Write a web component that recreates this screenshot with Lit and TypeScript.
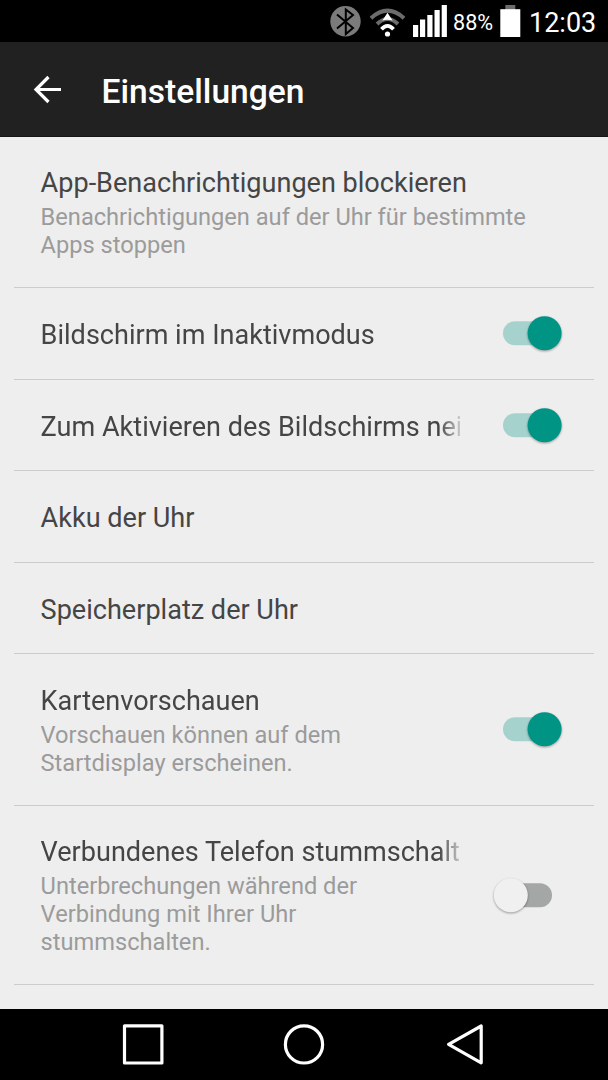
import { LitElement, html, css, svg, nothing } from "lit";
import { customElement, property } from "lit/decorators.js";
import { classMap } from "lit/directives/class-map.js";

@customElement("toggle-switch")
class ToggleSwitch extends LitElement {
  @property({ type: Boolean }) on = false;

  static styles = css`
    :host { display: block; width: 78px; height: 44px; flex: none; }
    svg { display: block; }
    .thumb { filter: drop-shadow(0 1.5px 1.2px rgba(0, 0, 0, 0.36)); }
  `;

  render() {
    return html`<svg width="78" height="44" viewBox="0 0 78 44">
      <rect x="13" y="10.2" width="49" height="24" rx="12" fill=${this.on ? "#a6d2cd" : "#a5a7a6"} />
      <circle class="thumb" cx=${this.on ? 54.6 : 20.8} cy="22.2" r="17" fill=${this.on ? "#009485" : "#f0f0f0"} />
    </svg>`;
  }
}

@customElement("settings-row")
class SettingsRow extends LitElement {
  @property() label = "";
  @property() summary = "";
  @property() toggle: "" | "on" | "off" = "";

  static styles = css`
    :host { display: flex; align-items: center; box-sizing: border-box; margin: 0 14px; padding-left: 26.6px; border-bottom: 1px solid #cccccc; }
    .text { width: 500px; padding-bottom: 1px; }
    .text.narrow { width: 419px; overflow: hidden; padding-bottom: 0; }
    .text.single { padding: 3.6px 0 0; }
    .label { font-size: 27.07px; line-height: 38px; color: #454545; white-space: nowrap; }
    .narrow .label { -webkit-mask-image: linear-gradient(to right, #000 398px, transparent 425px); mask-image: linear-gradient(to right, #000 398px, transparent 425px); overflow: hidden; }
    .summary { font-size: 23.64px; line-height: 28px; color: #9b9b9b; margin-top: 1px; white-space: pre-line; }
    toggle-switch { margin-left: 30.4px; }
  `;

  render() {
    return html`
      <div class=${classMap({ text: true, narrow: this.toggle !== "", single: !this.summary })}>
        <div class="label">${this.label}</div>
        ${this.summary ? html`<div class="summary">${this.summary}</div>` : nothing}
      </div>
      ${this.toggle ? html`<toggle-switch ?on=${this.toggle === "on"}></toggle-switch>` : nothing}
    `;
  }
}

const items: { label: string; summary?: string; toggle?: string; height: number }[] = [
  { label: "App-Benachrichtigungen blockieren", summary: "Benachrichtigungen auf der Uhr für bestimmte\nApps stoppen", height: 151 },
  { label: "Bildschirm im Inaktivmodus", toggle: "on", height: 91.5 },
  { label: "Zum Aktivieren des Bildschirms neigen", toggle: "on", height: 91.5 },
  { label: "Akku der Uhr", height: 91.5 },
  { label: "Speicherplatz der Uhr", height: 91.5 },
  { label: "Kartenvorschauen", summary: "Vorschauen können auf dem\nStartdisplay erscheinen.", toggle: "on", height: 151.5 },
  { label: "Verbundenes Telefon stummschalten", summary: "Unterbrechungen während der\nVerbindung mit Ihrer Uhr\nstummschalten.", toggle: "off", height: 179.5 },
];

const bars = [[413, 25, 12], [420, 19.5, 17.5], [427.3, 15, 22], [434.5, 10, 27], [441.7, 5, 32]];

@customElement("app-root")
class AppRoot extends LitElement {
  static styles = css`
    :host { display: flex; flex-direction: column; width: 608px; height: 1080px; overflow: hidden; background: #eeeeee; font-family: Roboto, sans-serif; }
    svg { display: block; flex: none; }
    .status { display: flex; height: 42px; background: #000; color: #fff; flex: none; white-space: nowrap; }
    .percent { font-size: 21.6px; line-height: 45px; width: 47px; }
    .clock { font-size: 27px; line-height: 46px; margin-left: 8px; }
    .bar { display: flex; box-sizing: border-box; height: 95px; background: #212121; color: #fff; flex: none; border-bottom: 1px solid #161616; }
    .title { font-size: 33.6px; font-weight: 500; line-height: 99px; margin: 0 0 0 37.6px; }
    .list { flex: 1; display: flex; flex-direction: column; overflow: hidden; }
    settings-row { flex: none; }
    .nav { height: 71px; background: #000; flex: none; }
  `;

  render() {
    return html`
      <div class="status">
        <svg width="453" height="42" viewBox="0 0 453 42">
          <circle cx="345.5" cy="21.3" r="15.2" fill="#7b7b7b" />
          <path d="M337 14.5L353 28L345.8 34V9.5L353 15L337 28.5" fill="none" stroke="#000" stroke-width="2" />
          <path d="M371 18.2Q387.5 3.2 404 18.2" fill="none" stroke="#6c6c6c" stroke-width="4" />
          <path d="M377 24Q387.5 14 398 24" fill="none" stroke="#6c6c6c" stroke-width="4" />
          <path d="M387.5 12.8L392.6 20.6Q387.5 19 382.4 20.6Z" fill="#fff" />
          <path d="M381.5 29.2Q387.5 22.6 393.5 29.2" fill="none" stroke="#fff" stroke-width="3.8" />
          <circle cx="387.5" cy="34" r="2.6" fill="#fff" />
          ${bars.map(([x, y, h]) => svg`<rect x=${x} y=${y} width="5.2" height=${h} fill="#fff" />`)}
        </svg>
        <span class="percent">88%</span>
        <svg width="21" height="42" viewBox="0 0 21 42">
          <rect x="5.3" y="5" width="10" height="5" fill="#6c6c6c" />
          <rect x="0.3" y="9.2" width="20" height="27.8" fill="#fff" />
        </svg>
        <span class="clock">12:03</span>
      </div>
      <div class="bar">
        <svg width="64" height="95" viewBox="0 0 64 95">
          <path d="M61 47.5H36.5M48.5 35L36 47.5L48.5 60" fill="none" stroke="#fff" stroke-width="3.2" />
        </svg>
        <h1 class="title">Einstellungen</h1>
      </div>
      <div class="list">
        ${items.map(
          (i) => html`<settings-row style="height:${i.height}px" .label=${i.label} .summary=${i.summary ?? ""} .toggle=${i.toggle ?? ""}></settings-row>`
        )}
      </div>
      <div class="nav">
        <svg width="608" height="71" viewBox="0 0 608 71" fill="none" stroke="#fff" stroke-width="3.2" stroke-linejoin="round">
          <rect x="124.5" y="16.8" width="37.4" height="37.2" />
          <circle cx="304" cy="35.4" r="18.6" />
          <path d="M481.2 17V53.8L448.6 35.4Z" />
        </svg>
      </div>
    `;
  }
}
